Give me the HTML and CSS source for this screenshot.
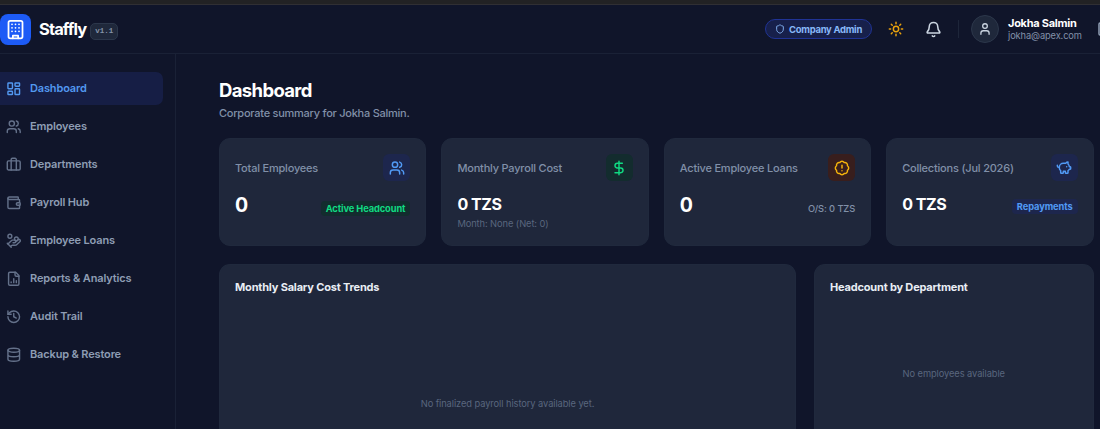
FILE: index.html
```
<!DOCTYPE html>
<html lang="en">
<head>
    <meta charset="UTF-8">
    <title>Staffly - Dashboard</title>
    <link rel="stylesheet" href="styles.css">
</head>
<body>
    <!--Header-->
    <header class="topbar">
        <div class="brand">
            <div class="logo">
                <svg class="icon" viewBox="0 0 24 24"><rect width="16" height="20" x="4" y="2" rx="2"/><path d="M9 22v-3h6v3M8 6h.01M12 6h.01M16 6h.01M8 10h.01M12 10h.01M16 10h.01M8 14h.01M12 14h.01M16 14h.01"/></svg>
            </div>
            <span class="brand-name">Staffly</span>
            <span class="version">v1.1</span>
        </div>
        <div class="topbar-right">
            <span class="role">
                <svg class="icon" viewBox="0 0 24 24"><path d="M20 13c0 5-3.5 7.500-7.660 8.950a1 1 0 0 1-.67-.01C7.500 20.500 4 18 4 13V6a1 1 0 0 1 1-1c2 0 4.500-1.200 6.240-2.720a1.170 1.170 0 0 1 1.520 0C14.510 3.810 17 5 19 5a1 1 0 0 1 1 1z"/></svg>
                Company Admin
            </span>
            <svg class="icon sun" viewBox="0 0 24 24"><circle cx="12" cy="12" r="4"/><path d="M12 2v2M12 20v2M4.930 4.930l1.410 1.410M17.660 17.660l1.410 1.410M2 12h2M20 12h2M6.340 17.660l-1.410 1.410M19.070 4.930l-1.410 1.410"/></svg>
            <svg class="icon bell" viewBox="0 0 24 24"><path d="M10.268 21a2 2 0 0 0 3.464 0"/><path d="M3.262 15.326A1 1 0 0 0 4 17h16a1 1 0 0 0 .74-1.673C19.410 13.956 18 12.499 18 8A6 6 0 0 0 6 8c0 4.499-1.411 5.956-2.738 7.326"/></svg>
            <span class="divider"></span>
            <div class="avatar">
                <svg class="icon" viewBox="0 0 24 24"><path d="M19 21v-2a4 4 0 0 0-4-4H9a4 4 0 0 0-4 4v2"/><circle cx="12" cy="7" r="4"/></svg>
            </div>
            <div class="user">
                <div class="user-name">Jokha Salmin</div>
                <div class="user-email">jokha@apex.com</div>
            </div>
            <svg class="icon logout" viewBox="0 0 24 24"><path d="M9 21H5a2 2 0 0 1-2-2V5a2 2 0 0 1 2-2h4M16 17l5-5-5-5M21 12H9"/></svg>
        </div>
    </header>

    <div class="layout">
        <!--Sidebar-->
        <nav class="sidebar">
            <a class="nav-item active">
                <svg class="icon" viewBox="0 0 24 24"><rect width="7" height="9" x="3" y="3" rx="1"/><rect width="7" height="5" x="14" y="3" rx="1"/><rect width="7" height="9" x="14" y="12" rx="1"/><rect width="7" height="5" x="3" y="16" rx="1"/></svg>
                <span>Dashboard</span>
            </a>
            <a class="nav-item">
                <svg class="icon" viewBox="0 0 24 24"><path d="M16 21v-2a4 4 0 0 0-4-4H6a4 4 0 0 0-4 4v2"/><circle cx="9" cy="7" r="4"/><path d="M22 21v-2a4 4 0 0 0-3-3.870M16 3.130a4 4 0 0 1 0 7.750"/></svg>
                <span>Employees</span>
            </a>
            <a class="nav-item">
                <svg class="icon" viewBox="0 0 24 24"><path d="M16 20V4a2 2 0 0 0-2-2h-4a2 2 0 0 0-2 2v16"/><rect width="20" height="14" x="2" y="6" rx="2"/></svg>
                <span>Departments</span>
            </a>
            <a class="nav-item">
                <svg class="icon" viewBox="0 0 24 24"><path d="M19 7V4a1 1 0 0 0-1-1H5a2 2 0 0 0 0 4h15a1 1 0 0 1 1 1v4h-3a2 2 0 0 0 0 4h3a1 1 0 0 0 1-1v-2a1 1 0 0 0-1-1"/><path d="M3 5v14a2 2 0 0 0 2 2h15a1 1 0 0 0 1-1v-4"/></svg>
                <span>Payroll Hub</span>
            </a>
            <a class="nav-item">
                <svg class="icon" viewBox="0 0 24 24"><path d="M11 15h2a2 2 0 1 0 0-4h-3c-.6 0-1.100.2-1.400.6L3 17"/><path d="m7 21 1.600-1.400c.3-.4.8-.6 1.400-.6h4c1.100 0 2.100-.4 2.800-1.200l4.600-4.400a2 2 0 0 0-2.750-2.910l-4.200 3.900M2 16l6 6"/><circle cx="16" cy="9" r="2.900"/><circle cx="6" cy="5" r="3"/></svg>
                <span>Employee Loans</span>
            </a>
            <a class="nav-item">
                <svg class="icon" viewBox="0 0 24 24"><path d="M15 2H6a2 2 0 0 0-2 2v16a2 2 0 0 0 2 2h12a2 2 0 0 0 2-2V7z"/><path d="M14 2v4a2 2 0 0 0 2 2h4M8 18v-1M12 18v-6M16 18v-3"/></svg>
                <span>Reports &amp; Analytics</span>
            </a>
            <a class="nav-item">
                <svg class="icon" viewBox="0 0 24 24"><path d="M3 12a9 9 0 1 0 9-9 9.750 9.750 0 0 0-6.740 2.740L3 8"/><path d="M3 3v5h5M12 7v5l4 2"/></svg>
                <span>Audit Trail</span>
            </a>
            <a class="nav-item">
                <svg class="icon" viewBox="0 0 24 24"><ellipse cx="12" cy="5" rx="9" ry="3"/><path d="M3 5v14a9 3 0 0 0 18 0V5M3 12a9 3 0 0 0 18 0"/></svg>
                <span>Backup &amp; Restore</span>
            </a>
        </nav>

        <!--Main Content-->
        <main class="content">
            <h1>Dashboard</h1>
            <p class="subtitle">Corporate summary for Jokha Salmin.</p>

            <!--Stat Cards-->
            <div class="stats">
                <div class="card">
                    <div class="card-head">
                        <span class="card-label">Total Employees</span>
                        <div class="card-icon blue">
                            <svg class="icon" viewBox="0 0 24 24"><path d="M16 21v-2a4 4 0 0 0-4-4H6a4 4 0 0 0-4 4v2"/><circle cx="9" cy="7" r="4"/><path d="M22 21v-2a4 4 0 0 0-3-3.870M16 3.130a4 4 0 0 1 0 7.750"/></svg>
                        </div>
                    </div>
                    <div class="card-row">
                        <span class="count">0</span>
                        <span class="tag green">Active Headcount</span>
                    </div>
                </div>
                <div class="card">
                    <div class="card-head">
                        <span class="card-label">Monthly Payroll Cost</span>
                        <div class="card-icon green">
                            <svg class="icon" viewBox="0 0 24 24"><path d="M12 2v20M17 5H9.500a3.500 3.500 0 0 0 0 7h5a3.500 3.500 0 0 1 0 7H6"/></svg>
                        </div>
                    </div>
                    <div class="amount">0 TZS</div>
                    <div class="card-note">Month: None (Net: 0)</div>
                </div>
                <div class="card">
                    <div class="card-head">
                        <span class="card-label">Active Employee Loans</span>
                        <div class="card-icon amber">
                            <svg class="icon" viewBox="0 0 24 24"><path d="M3.850 8.620a4 4 0 0 1 4.780-4.770 4 4 0 0 1 6.740 0 4 4 0 0 1 4.780 4.780 4 4 0 0 1 0 6.740 4 4 0 0 1-4.770 4.780 4 4 0 0 1-6.750 0 4 4 0 0 1-4.780-4.770 4 4 0 0 1 0-6.760z"/><path d="M12 8v4M12 16h.01"/></svg>
                        </div>
                    </div>
                    <div class="card-row">
                        <span class="count">0</span>
                        <span class="outstanding">O/S: 0 TZS</span>
                    </div>
                </div>
                <div class="card">
                    <div class="card-head">
                        <span class="card-label">Collections (Jul 2026)</span>
                        <div class="card-icon blue">
                            <svg class="icon" viewBox="0 0 24 24"><path d="M11 17h3v2a1 1 0 0 0 1 1h2a1 1 0 0 0 1-1v-3a3.160 3.160 0 0 0 2-2h1a1 1 0 0 0 1-1v-2a1 1 0 0 0-1-1h-1a5 5 0 0 0-2-4V3a4 4 0 0 0-3.200 1.600l-.3.400H11a6 6 0 0 0-6 6v1a5 5 0 0 0 2 4v3a1 1 0 0 0 1 1h2a1 1 0 0 0 1-1z"/><path d="M16 10h.01M2 8v1a2 2 0 0 0 2 2h1"/></svg>
                        </div>
                    </div>
                    <div class="card-row">
                        <span class="amount">0 TZS</span>
                        <span class="tag blue">Repayments</span>
                    </div>
                </div>
            </div>

            <!--Charts-->
            <div class="charts">
                <div class="panel trends">
                    <h2>Monthly Salary Cost Trends</h2>
                    <div class="empty">No finalized payroll history available yet.</div>
                </div>
                <div class="panel headcount">
                    <h2>Headcount by Department</h2>
                    <div class="empty">No employees available</div>
                </div>
            </div>
        </main>
    </div>
</body>
</html>
```
FILE: styles.css
```
* {
    box-sizing: border-box;
}
body {
    margin: 0;
    height: 429px;
    overflow: hidden;
    background-color: #10152a;
    border-top: 4px solid #222224;
    color: #fff;
    font-family: Inter, sans-serif;
    white-space: nowrap;
}
.icon {
    display: block;
    flex: none;
    width: 16px;
    height: 16px;
    fill: none;
    stroke: currentColor;
    stroke-width: 2.2;
    stroke-linecap: round;
    stroke-linejoin: round;
}

/* header */
.topbar {
    display: flex;
    justify-content: space-between;
    height: 50px;
    overflow: hidden;
    border-top: 1px solid #302f33;
    border-bottom: 1px solid #1a2136;
}
.brand, .topbar-right {
    display: flex;
    align-items: center;
}
.logo {
    display: flex;
    align-items: center;
    justify-content: center;
    width: 31px;
    height: 31px;
    border-radius: 8px;
    background-color: #1d5bf6;
}
.logo .icon {
    width: 21px;
    height: 21px;
    stroke-width: 2;
}
.brand-name {
    margin-left: 8px;
    font-size: 16.5px;
    font-weight: 700;
    letter-spacing: -0.9px;
}
.version {
    margin: 5px 0 0 4px;
    height: 17px;
    padding: 0 4px;
    border: 1px solid #2c374b;
    border-radius: 5px;
    background-color: #1f283b;
    color: #8592a8;
    font-family: "Liberation Mono", monospace;
    font-size: 7.5px;
    font-weight: 700;
    line-height: 15px;
}
.role {
    display: flex;
    align-items: center;
    gap: 4px;
    height: 20px;
    margin-right: 16px;
    padding: 0 9px;
    border: 1px solid #203394;
    border-radius: 10px;
    background-color: #17204b;
    color: #88b8f8;
    font-size: 9.5px;
    font-weight: 650;
    letter-spacing: -0.3px;
}
.role .icon {
    width: 10px;
    height: 10px;
}
.sun {
    color: #eaa20c;
    margin-right: 21px;
}
.bell {
    width: 17px;
    height: 17px;
    color: #cbd5e1;
}
.divider {
    width: 1px;
    height: 18px;
    margin: 0 12px 0 16px;
    background-color: #1e263a;
}
.avatar {
    display: flex;
    align-items: center;
    justify-content: center;
    width: 28px;
    height: 28px;
    border: 1px solid #2c374b;
    border-radius: 50%;
    background-color: #1f283b;
    color: #cbd5e1;
}
.avatar .icon {
    width: 14px;
    height: 14px;
}
.user {
    width: 76px;
    margin: 0 13px 0 9px;
}
.user-name {
    font-size: 11px;
    font-weight: 650;
    line-height: 13px;
    letter-spacing: -0.28px;
}
.user-email {
    color: #8290a8;
    font-size: 9.3px;
    line-height: 12px;
    letter-spacing: -0.12px;
}
.logout {
    margin-right: -13px;
    color: #94a3b8;
}

/* sidebar */
.layout {
    display: flex;
    height: 375px;
}
.sidebar {
    display: flex;
    flex: none;
    flex-direction: column;
    gap: 4.1px;
    width: 176px;
    padding: 17.5px 12px 0 0;
    border-right: 1px solid #1a2136;
}
.nav-item {
    display: flex;
    align-items: center;
    gap: 9px;
    height: 33.9px;
    padding-left: 5.5px;
    border-radius: 0 7px 7px 0;
    color: #8e9db4;
    font-size: 11px;
    font-weight: 600;
    letter-spacing: -0.15px;
}
.nav-item .icon {
    width: 15.5px;
    height: 15.5px;
    color: #64718a;
}
.nav-item.active {
    background-color: #161e45;
}
.nav-item.active, .nav-item.active .icon {
    color: #5298f0;
}

/* content */
.content {
    display: flex;
    flex: 1;
    flex-direction: column;
    padding: 24px 6.5px 0 43px;
}
h1 {
    margin: 0;
    font-size: 18.5px;
    font-weight: 700;
    line-height: 24px;
    letter-spacing: -0.65px;
}
.subtitle {
    margin: 3px 0 17px;
    color: #8190a8;
    font-size: 11px;
    font-weight: 450;
    line-height: 16px;
    letter-spacing: -0.25px;
}
.stats {
    display: grid;
    grid-template-columns: repeat(4, 1fr);
    gap: 15px;
}
.card, .panel {
    border: 1px solid #20293d;
    border-radius: 11px;
    background-color: #1f273b;
}
.card {
    height: 107.5px;
    padding: 15px 15px 0;
}
.card-head {
    display: flex;
    align-items: center;
    justify-content: space-between;
    margin-bottom: 11px;
}
.card-label {
    color: #8190a8;
    font-size: 11px;
    font-weight: 500;
    letter-spacing: -0.2px;
}
.card-icon {
    display: flex;
    align-items: center;
    justify-content: center;
    width: 27px;
    height: 27px;
    border-radius: 6px;
}
.blue {
    background-color: #1d264d;
    color: #519af5;
}
.green {
    background-color: #132c2e;
    color: #10da82;
}
.amber {
    background-color: #381e1d;
    color: #f5b30b;
}
.card-row {
    display: flex;
    align-items: center;
    justify-content: space-between;
}
.count {
    font-size: 19.5px;
    font-weight: 700;
    line-height: 27px;
}
.amount {
    font-size: 16px;
    font-weight: 700;
    line-height: 24px;
    letter-spacing: -0.45px;
}
.tag {
    margin-top: 5px;
    padding: 0 5px;
    border-radius: 4px;
    font-size: 9.3px;
    font-weight: 650;
    line-height: 15px;
    letter-spacing: -0.1px;
}
.outstanding {
    margin-top: 5px;
    color: #8190a8;
    font-size: 9.3px;
    font-weight: 500;
    letter-spacing: -0.1px;
}
.card-note {
    margin-top: 1px;
    color: #59667e;
    font-size: 9.3px;
    line-height: 14px;
    letter-spacing: -0.08px;
}
.charts {
    display: grid;
    flex: 1;
    grid-template-columns: 577px 1fr;
    gap: 18px;
    margin-top: 18.5px;
}
.panel {
    padding: 14px 15px 0;
    border-bottom: none;
    border-radius: 11px 11px 0 0;
}
h2 {
    margin: 0;
    color: #e8edf4;
    font-size: 11px;
    font-weight: 650;
    line-height: 16px;
    letter-spacing: -0.18px;
}
.empty {
    color: #59667e;
    font-size: 9.3px;
    line-height: 14px;
    letter-spacing: -0.08px;
    text-align: center;
}
.trends .empty {
    margin-top: 102px;
}
.headcount .empty {
    margin-top: 72px;
}
```
